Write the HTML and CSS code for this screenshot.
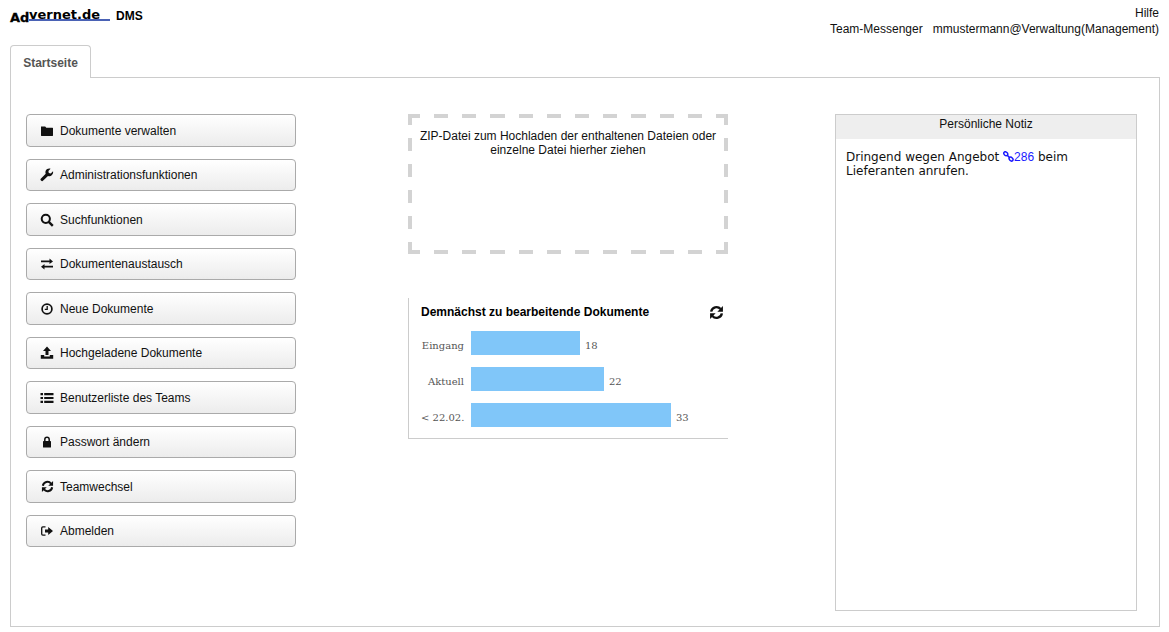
FILE: index.html
```html
<!DOCTYPE html>
<html lang="de">
<head>
    <meta charset="UTF-8">
    <title>Advernet.de DMS</title>
    <link rel="stylesheet" href="styles.css">
</head>
<body>
    <svg class="sprite" xmlns="http://www.w3.org/2000/svg">
        <symbol id="i-folder" viewBox="0 0 14 14"><path d="M1 2.500h4.200l1.100 1.200h6.200c.3 0 .5.2.5.5v7.300c0 .3-.2.5-.5.5h-11c-.3 0-.5-.2-.5-.5z"/></symbol>
        <symbol id="i-wrench" viewBox="0 0 14 14"><path d="M13 3.200l-2.200 2.200-2-.4-.4-2L10.600.8C8.700.1 6.500 1 5.700 2.800c-.4 1-.4 2 0 2.900L1 10.400a1.500 1.500 0 0 0 2.200 2.200L8 8c2.700 1.200 5.900-1.400 5-4.800z"/></symbol>
        <symbol id="i-search" viewBox="0 0 14 14"><circle cx="5.800" cy="5.800" r="4.100" fill="none" stroke="currentColor" stroke-width="2"/><path d="M8.800 8.800l4 4" stroke="currentColor" stroke-width="2.400" fill="none"/></symbol>
        <symbol id="i-transfer" viewBox="0 0 14 14"><path d="M1 3.500h8.500V1.500L13 4.500 9.500 7V5.200H1zM13 8.800H4.500V7L1 9.800l3.500 2.700v-2H13z"/></symbol>
        <symbol id="i-clock" viewBox="0 0 14 14"><circle cx="7" cy="7" r="4.900" fill="none" stroke="currentColor" stroke-width="1.700"/><path d="M7.200 4V7.400H4.800" fill="none" stroke="currentColor" stroke-width="1.300"/></symbol>
        <symbol id="i-upload" viewBox="0 0 14 14"><path d="M7 .5L11 5H8.500v4h-3V5H3zM.8 9h3.400v1.600h5.600V9h3.400v3.800H.8z"/></symbol>
        <symbol id="i-list" viewBox="0 0 14 14"><path d="M.5 2h2.500v2.200H.5zM4.200 2h9.300v2.200H4.200zM.5 5.900h2.500v2.200H.5zM4.200 5.900h9.300v2.200H4.200zM.5 9.800h2.500V12H.5zM4.200 9.800h9.300V12H4.200z"/></symbol>
        <symbol id="i-lock" viewBox="0 0 14 14"><path d="M4.800 6.500V4.500a2.200 2.200 0 0 1 4.400 0v2" fill="none" stroke="currentColor" stroke-width="1.500"/><rect x="3" y="6" width="8" height="6.500" rx=".6"/></symbol>
        <symbol id="i-refresh" viewBox="0 0 14 14"><path d="M2 6.200A5 5 0 0 1 10.800 3.800M12 7.800A5 5 0 0 1 3.200 10.200" fill="none" stroke="currentColor" stroke-width="2.200"/><path d="M13 1v5.200H7.800zM1 13V7.800h5.200z"/></symbol>
        <symbol id="i-logout" viewBox="0 0 14 14"><path d="M5.500 2.800H2.800c-.6 0-1.100.5-1.100 1.100v6.200c0 .6.500 1.100 1.100 1.100h2.700" fill="none" stroke="currentColor" stroke-width="1.300"/><path d="M5 5.500h3.200V3L13 7l-4.800 4V8.500H5z"/></symbol>
        <symbol id="i-link" viewBox="0 0 12 12"><g fill="none" stroke="currentColor" stroke-width="1.600"><ellipse cx="3" cy="3" rx="2.400" ry="1.800" transform="rotate(45 3 3)"/><ellipse cx="8.800" cy="8.800" rx="2.400" ry="1.800" transform="rotate(45 8.800 8.800)"/><path d="M4.500 4.500l2.800 2.800"/></g></symbol>
    </svg>

    <header class="top">
        <div class="brand">
            <span class="logo"><span class="logo-ad">Ad</span><span class="logo-name">vernet.de</span></span>
            <span class="product">DMS</span>
        </div>
        <div class="user-links">
            <div>Hilfe</div>
            <div><span class="messenger">Team-Messenger</span>mmustermann@Verwaltung(Management)</div>
        </div>
    </header>

    <nav class="tabs">
        <div class="tab">Startseite</div>
    </nav>

    <main class="panel">
        <div class="menu">
            <button class="menu-btn"><svg class="icon"><use href="#i-folder"/></svg>Dokumente verwalten</button>
            <button class="menu-btn"><svg class="icon"><use href="#i-wrench"/></svg>Administrationsfunktionen</button>
            <button class="menu-btn"><svg class="icon"><use href="#i-search"/></svg>Suchfunktionen</button>
            <button class="menu-btn"><svg class="icon"><use href="#i-transfer"/></svg>Dokumentenaustausch</button>
            <button class="menu-btn"><svg class="icon"><use href="#i-clock"/></svg>Neue Dokumente</button>
            <button class="menu-btn"><svg class="icon"><use href="#i-upload"/></svg>Hochgeladene Dokumente</button>
            <button class="menu-btn"><svg class="icon"><use href="#i-list"/></svg>Benutzerliste des Teams</button>
            <button class="menu-btn"><svg class="icon"><use href="#i-lock"/></svg>Passwort ändern</button>
            <button class="menu-btn"><svg class="icon icon-small"><use href="#i-refresh"/></svg>Teamwechsel</button>
            <button class="menu-btn"><svg class="icon"><use href="#i-logout"/></svg>Abmelden</button>
        </div>

        <div class="middle">
            <div class="dropzone">ZIP-Datei zum Hochladen der enthaltenen Dateien oder einzelne Datei hierher ziehen</div>

            <section class="chart">
                <div class="chart-head">
                    <span class="chart-title">Demnächst zu bearbeitende Dokumente</span>
                    <svg class="icon chart-reload"><use href="#i-refresh"/></svg>
                </div>
                <div class="chart-row">
                    <span class="chart-label">Eingang</span>
                    <span class="chart-bar" style="width: 109px"></span>
                    <span class="chart-value">18</span>
                </div>
                <div class="chart-row">
                    <span class="chart-label">Aktuell</span>
                    <span class="chart-bar" style="width: 133px"></span>
                    <span class="chart-value">22</span>
                </div>
                <div class="chart-row">
                    <span class="chart-label">&lt; 22.02.</span>
                    <span class="chart-bar" style="width: 200px"></span>
                    <span class="chart-value">33</span>
                </div>
            </section>
        </div>

        <aside class="note">
            <div class="note-head">Persönliche Notiz</div>
            <div class="note-body">Dringend wegen Angebot <a class="doc-link"><svg class="icon link-icon"><use href="#i-link"/></svg>286</a> beim Lieferanten anrufen.</div>
        </aside>
    </main>
</body>
</html>
```

FILE: styles.css
```css
* {
    margin: 0;
    padding: 0;
    box-sizing: border-box;
}

body {
    font-family: "Liberation Sans", Arial, sans-serif;
    font-size: 12px;
    color: #111;
    background: white;
    overflow: hidden;
}

.sprite {
    display: none;
}

.icon {
    width: 14px;
    height: 14px;
    fill: currentColor;
    color: #111;
    flex-shrink: 0;
}

.icon-small {
    width: 13px;
    height: 13px;
    margin-left: 1px;
}

/* header */
.top {
    display: flex;
    justify-content: space-between;
    height: 45px;
    padding: 5px 10px 0 10px;
}

.brand {
    display: flex;
    align-items: flex-start;
    height: 18px;
}

.logo {
    display: flex;
    align-items: flex-end;
    width: 100px;
    height: 17px;
    color: black;
    font-family: "DejaVu Sans", Verdana, sans-serif;
    font-weight: bold;
    font-size: 13px;
    line-height: 9px;
}

.logo-ad {
    width: 19px;
    -webkit-text-stroke: 0.3px black;
}

.logo-name {
    width: 81px;
    margin-bottom: 1px;
    border-bottom: 2px solid #4a62b5;
}

.product {
    margin-left: 6px;
    margin-top: 4px;
    font-size: 12px;
    font-weight: bold;
    color: black;
}

.user-links {
    text-align: right;
    font-size: 12px;
    line-height: 16px;
}

.messenger {
    margin-right: 10px;
}

/* tabs */
.tabs {
    display: flex;
    padding-left: 10px;
    height: 33px;
}

.tab {
    width: 81px;
    height: 33px;
    border: 1px solid #ccc;
    border-bottom: none;
    border-radius: 4px 4px 0 0;
    background: white;
    text-align: center;
    line-height: 35px;
    font-size: 12px;
    font-weight: bold;
    color: #555;
    margin-bottom: -1px;
    z-index: 1;
}

.panel {
    display: flex;
    align-items: flex-start;
    height: 550px;
    margin: -1px 9px 0 10px;
    padding: 36px 0 0 15px;
    border: 1px solid #ccc;
}

/* left buttons */
.menu {
    display: flex;
    flex-direction: column;
    gap: 12px;
    width: 270px;
    margin-top: 0.300px;
}

.menu-btn {
    display: flex;
    align-items: center;
    gap: 6px;
    height: 32.500px;
    padding-left: 13px;
    border: 1px solid #aaa;
    border-radius: 4px;
    background: linear-gradient(to bottom, #fff 0%, #ececec 100%);
    font-family: inherit;
    font-size: 12px;
    color: #111;
    text-align: left;
}

/* middle column */
.middle {
    width: 320px;
    margin-left: 112px;
}

.dropzone {
    height: 140px;
    padding: 15px 10px 0;
    text-align: center;
    font-size: 12px;
    line-height: 14px;
    background:
        repeating-linear-gradient(90deg, #d3d3d3 -2.200px, #d3d3d3 12px, transparent 12px, transparent 26px) 0 0 / 100% 4px no-repeat,
        repeating-linear-gradient(90deg, #d3d3d3 -2.200px, #d3d3d3 12px, transparent 12px, transparent 26px) 0 100% / 100% 4px no-repeat,
        repeating-linear-gradient(180deg, #d3d3d3 -2px, #d3d3d3 11px, transparent 11px, transparent 24px) 0 0 / 4px 100% no-repeat,
        repeating-linear-gradient(180deg, #d3d3d3 -2px, #d3d3d3 11px, transparent 11px, transparent 24px) 100% 0 / 4px 100% no-repeat;
}

.chart {
    margin-top: 44px;
    height: 141px;
    padding: 6px 0 0 12px;
    border-left: 1px solid #ccc;
    border-bottom: 1px solid #ccc;
}

.chart-head {
    display: flex;
    justify-content: space-between;
    align-items: center;
    height: 16px;
    padding-right: 4px;
    margin-bottom: 11px;
}

.chart-title {
    font-size: 12px;
    font-weight: bold;
    color: black;
}

.chart-reload {
    width: 15px;
    height: 15px;
}

.chart-row {
    display: flex;
    align-items: center;
    height: 24px;
    margin-bottom: 12px;
    font-family: "DejaVu Serif", "Liberation Serif", serif;
    font-size: 10px;
    color: #555;
}

.chart-label {
    width: 43px;
    margin-right: 7px;
    padding-top: 4px;
    text-align: right;
    white-space: nowrap;
}

.chart-bar {
    height: 24px;
    background: #80c6f9;
}

.chart-value {
    margin-left: 5px;
    padding-top: 4px;
}

/* note */
.note {
    width: 302px;
    height: 497px;
    margin-left: 107px;
    border: 1px solid #ccc;
}

.note-head {
    height: 24px;
    line-height: 18px;
    text-align: center;
    background: #eee;
    font-size: 12px;
}

.note-body {
    padding: 11px 10px;
    font-family: "DejaVu Sans", Verdana, sans-serif;
    font-size: 12px;
    line-height: 14px;
    color: #111;
}

.doc-link {
    color: #1a1aff;
    font-family: "Liberation Sans", Arial, sans-serif;
    font-size: 12px;
}

.link-icon {
    width: 11px;
    height: 11px;
    color: #1a1aff;
    vertical-align: -1px;
}
```
